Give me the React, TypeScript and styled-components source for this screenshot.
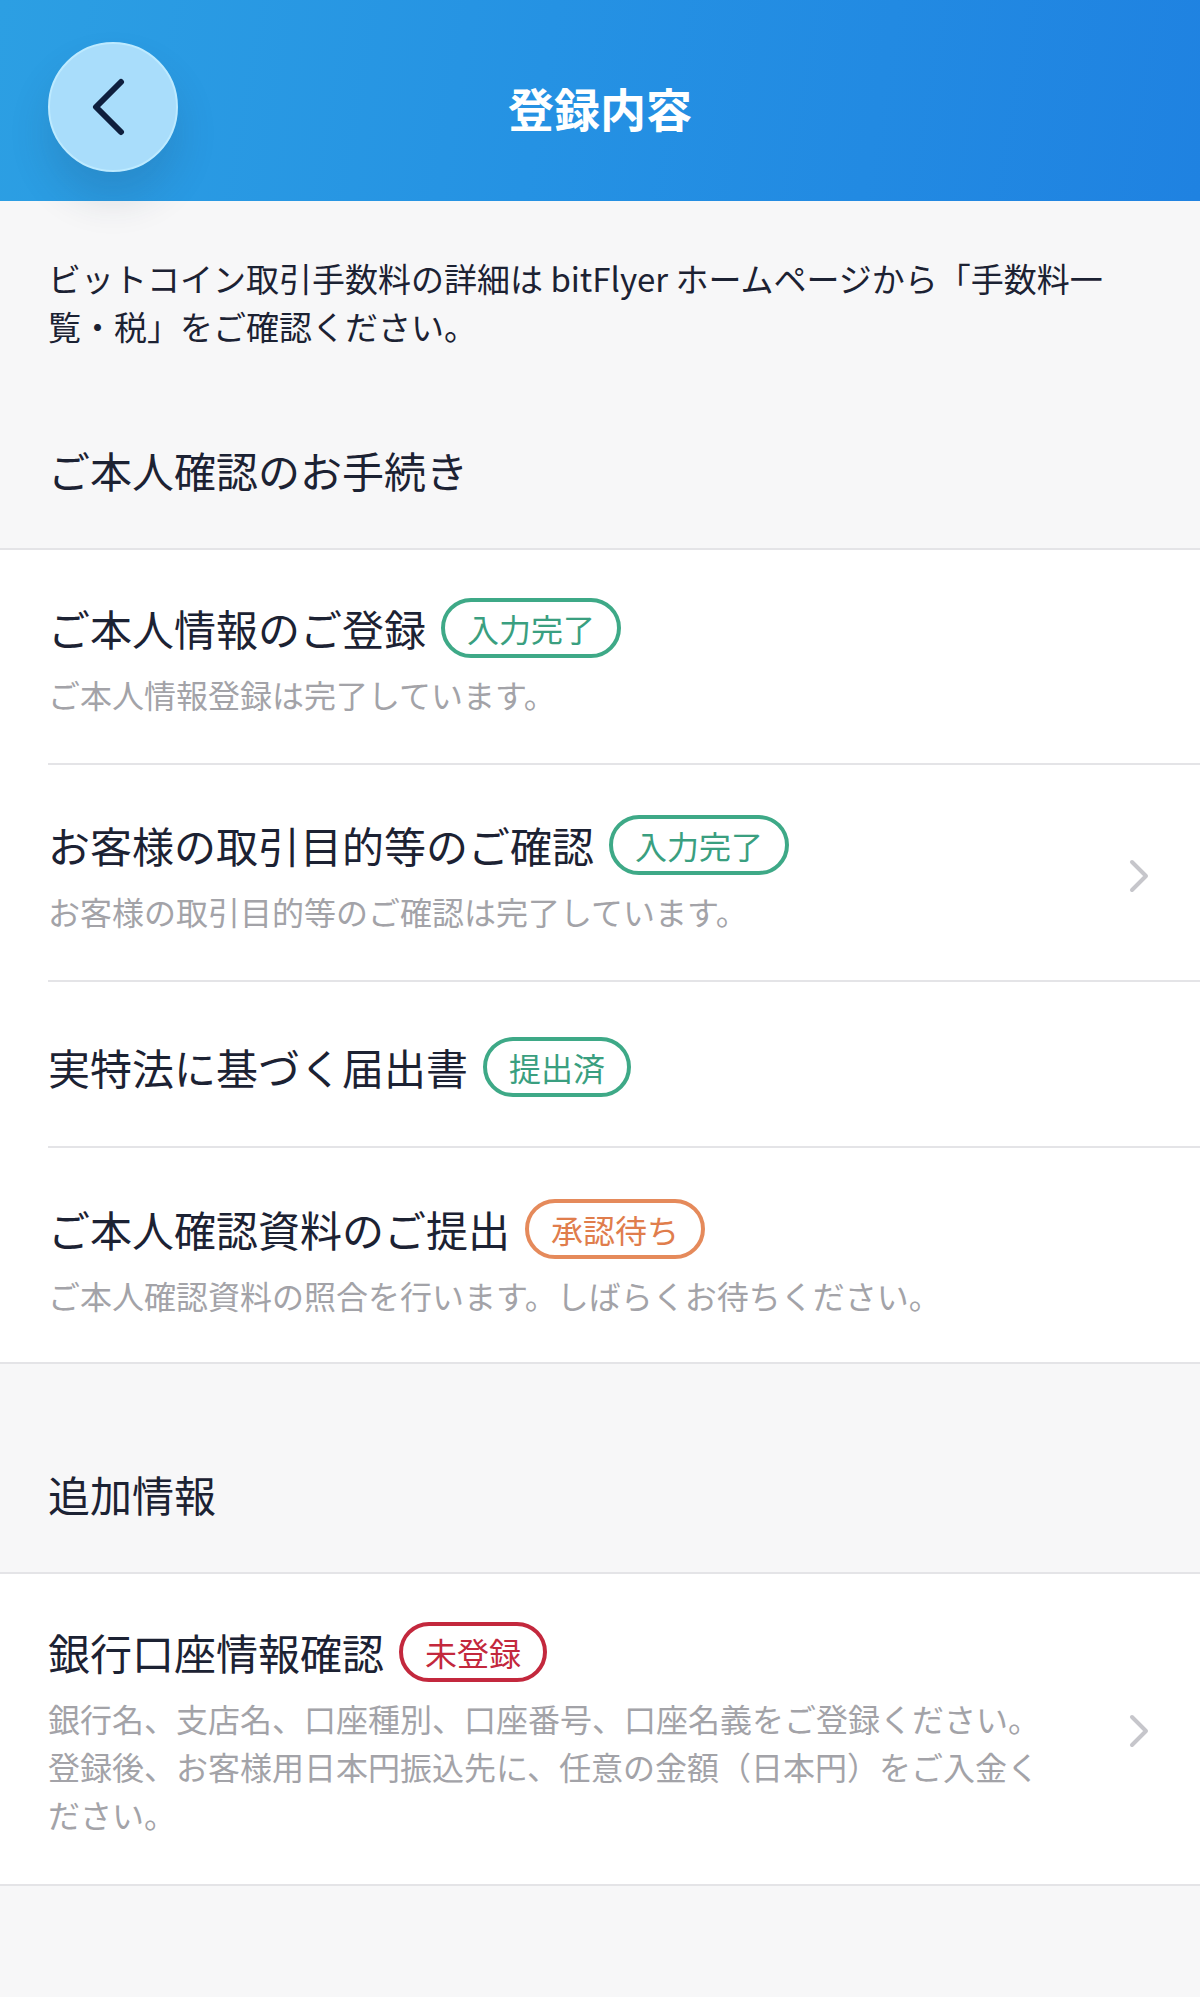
import React from "react";
import styled, { createGlobalStyle } from "styled-components";

const GlobalStyle = createGlobalStyle`
  html, body {
    margin: 0;
    padding: 0;
    background: #f7f7f8;
  }
  body {
    font-family: "Noto Sans CJK JP", "Noto Sans", sans-serif;
    color: #1c2233;
  }
  * {
    box-sizing: border-box;
  }
`;

const Page = styled.div`
  min-height: 1997px;
  background: #f7f7f8;
`;

const Header = styled.header`
  position: relative;
  z-index: 1;
  height: 201px;
  display: grid;
  grid-template-columns: 1fr auto 1fr;
  align-items: center;
  padding: 12px 48px 0;
  background: linear-gradient(100deg, #2c9fe3 0%, #2592e3 45%, #1f82e1 100%);
`;

const BackButton = styled.button`
  width: 130px;
  height: 130px;
  border-radius: 50%;
  border: 2px solid #bdeaff;
  background: #a9ddfb;
  box-shadow: 0 26px 40px rgba(40, 55, 80, 0.16);
  display: flex;
  align-items: center;
  justify-content: center;
  padding: 0 10px 0 0;
  cursor: pointer;
`;

const HeaderTitle = styled.h1`
  margin: 0;
  color: #ffffff;
  font-size: 46px;
  font-weight: 700;
  line-height: 1;
`;

const Intro = styled.p`
  margin: 0;
  padding: 53px 60px 0 48px;
  font-size: 33px;
  line-height: 48px;
  white-space: pre-line;
  color: #1c2233;
`;

const SectionHeading = styled.h2<{ $pt: number }>`
  margin: 0;
  padding: ${(p) => p.$pt}px 48px 50px;
  font-size: 42px;
  font-weight: 400;
  line-height: 56px;
  color: #1c2233;
`;

const List = styled.div`
  background: #ffffff;
  border-top: 2px solid #e4e4e7;
  border-bottom: 2px solid #e4e4e7;
`;

const Item = styled.div<{ $pt: number; $pb: number }>`
  margin-left: 48px;
  padding: ${(p) => p.$pt}px 50px ${(p) => p.$pb}px 0;
  display: flex;
  align-items: center;
  gap: 24px;
  border-bottom: 2px solid #e4e4e7;

  &:last-child {
    border-bottom: none;
  }
`;

const ItemBody = styled.div`
  flex: 1;
  display: flex;
  flex-direction: column;
  gap: 13px;
`;

const TitleRow = styled.div`
  height: 58px;
  display: flex;
  align-items: center;
  gap: 15px;
`;

const ItemTitle = styled.span`
  font-size: 42px;
  line-height: 58px;
  color: #1c2233;
  white-space: nowrap;
`;

const badgeColors = {
  done: { border: "#3ea987", text: "#3a9f80" },
  waiting: { border: "#e58a5b", text: "#e07d4c" },
  missing: { border: "#c3283d", text: "#c3283d" },
};

type BadgeKind = keyof typeof badgeColors;

const Badge = styled.span<{ $kind: BadgeKind }>`
  height: 60px;
  padding: 0 22px;
  display: inline-flex;
  align-items: center;
  border: 4px solid ${(p) => badgeColors[p.$kind].border};
  border-radius: 30px;
  color: ${(p) => badgeColors[p.$kind].text};
  font-size: 32px;
  line-height: 1;
  white-space: nowrap;
`;

const ItemDescription = styled.p`
  margin: 0;
  font-size: 32px;
  line-height: 48px;
  color: #a3a3a8;
  white-space: pre-line;
`;

function BackChevron() {
  return (
    <svg width="38" height="58" viewBox="0 0 38 58" fill="none">
      <polyline
        points="32,4 7,29 32,54"
        stroke="#0f1f3d"
        strokeWidth="6"
        strokeLinecap="round"
        strokeLinejoin="round"
      />
    </svg>
  );
}

function RowChevron() {
  return (
    <svg width="22" height="36" viewBox="0 0 22 36" fill="none">
      <polyline
        points="4,4 18,18 4,32"
        stroke="#c6c6cb"
        strokeWidth="4"
        strokeLinecap="round"
        strokeLinejoin="round"
      />
    </svg>
  );
}

type Entry = {
  title: string;
  badge: string;
  kind: BadgeKind;
  description?: string;
  link?: boolean;
  pt: number;
  pb: number;
};

const identityEntries: Entry[] = [
  {
    title: "ご本人情報のご登録",
    badge: "入力完了",
    kind: "done",
    description: "ご本人情報登録は完了しています。",
    pt: 49,
    pb: 45,
  },
  {
    title: "お客様の取引目的等のご確認",
    badge: "入力完了",
    kind: "done",
    description: "お客様の取引目的等のご確認は完了しています。",
    link: true,
    pt: 51,
    pb: 45,
  },
  {
    title: "実特法に基づく届出書",
    badge: "提出済",
    kind: "done",
    pt: 56,
    pb: 50,
  },
  {
    title: "ご本人確認資料のご提出",
    badge: "承認待ち",
    kind: "waiting",
    description: "ご本人確認資料の照合を行います。しばらくお待ちください。",
    pt: 52,
    pb: 43,
  },
];

const extraEntries: Entry[] = [
  {
    title: "銀行口座情報確認",
    badge: "未登録",
    kind: "missing",
    description:
      "銀行名、支店名、口座種別、口座番号、口座名義をご登録ください。\n登録後、お客様用日本円振込先に、任意の金額（日本円）をご入金く\nださい。",
    link: true,
    pt: 49,
    pb: 46,
  },
];

function EntryRow({ entry }: { entry: Entry }) {
  return (
    <Item $pt={entry.pt} $pb={entry.pb}>
      <ItemBody>
        <TitleRow>
          <ItemTitle>{entry.title}</ItemTitle>
          <Badge $kind={entry.kind}>{entry.badge}</Badge>
        </TitleRow>
        {entry.description && (
          <ItemDescription>{entry.description}</ItemDescription>
        )}
      </ItemBody>
      {entry.link && <RowChevron />}
    </Item>
  );
}

export default function App() {
  return (
    <Page>
      <GlobalStyle />
      <Header>
        <div>
          <BackButton aria-label="戻る">
            <BackChevron />
          </BackButton>
        </div>
        <HeaderTitle>登録内容</HeaderTitle>
        <div />
      </Header>

      <Intro>
        {"ビットコイン取引手数料の詳細は bitFlyer ホームページから「手数料一\n覧・税」をご確認ください。"}
      </Intro>

      <SectionHeading $pt={92}>ご本人確認のお手続き</SectionHeading>
      <List>
        {identityEntries.map((entry) => (
          <EntryRow entry={entry} key={entry.title} />
        ))}
      </List>

      <SectionHeading $pt={102}>追加情報</SectionHeading>
      <List>
        {extraEntries.map((entry) => (
          <EntryRow entry={entry} key={entry.title} />
        ))}
      </List>
    </Page>
  );
}
